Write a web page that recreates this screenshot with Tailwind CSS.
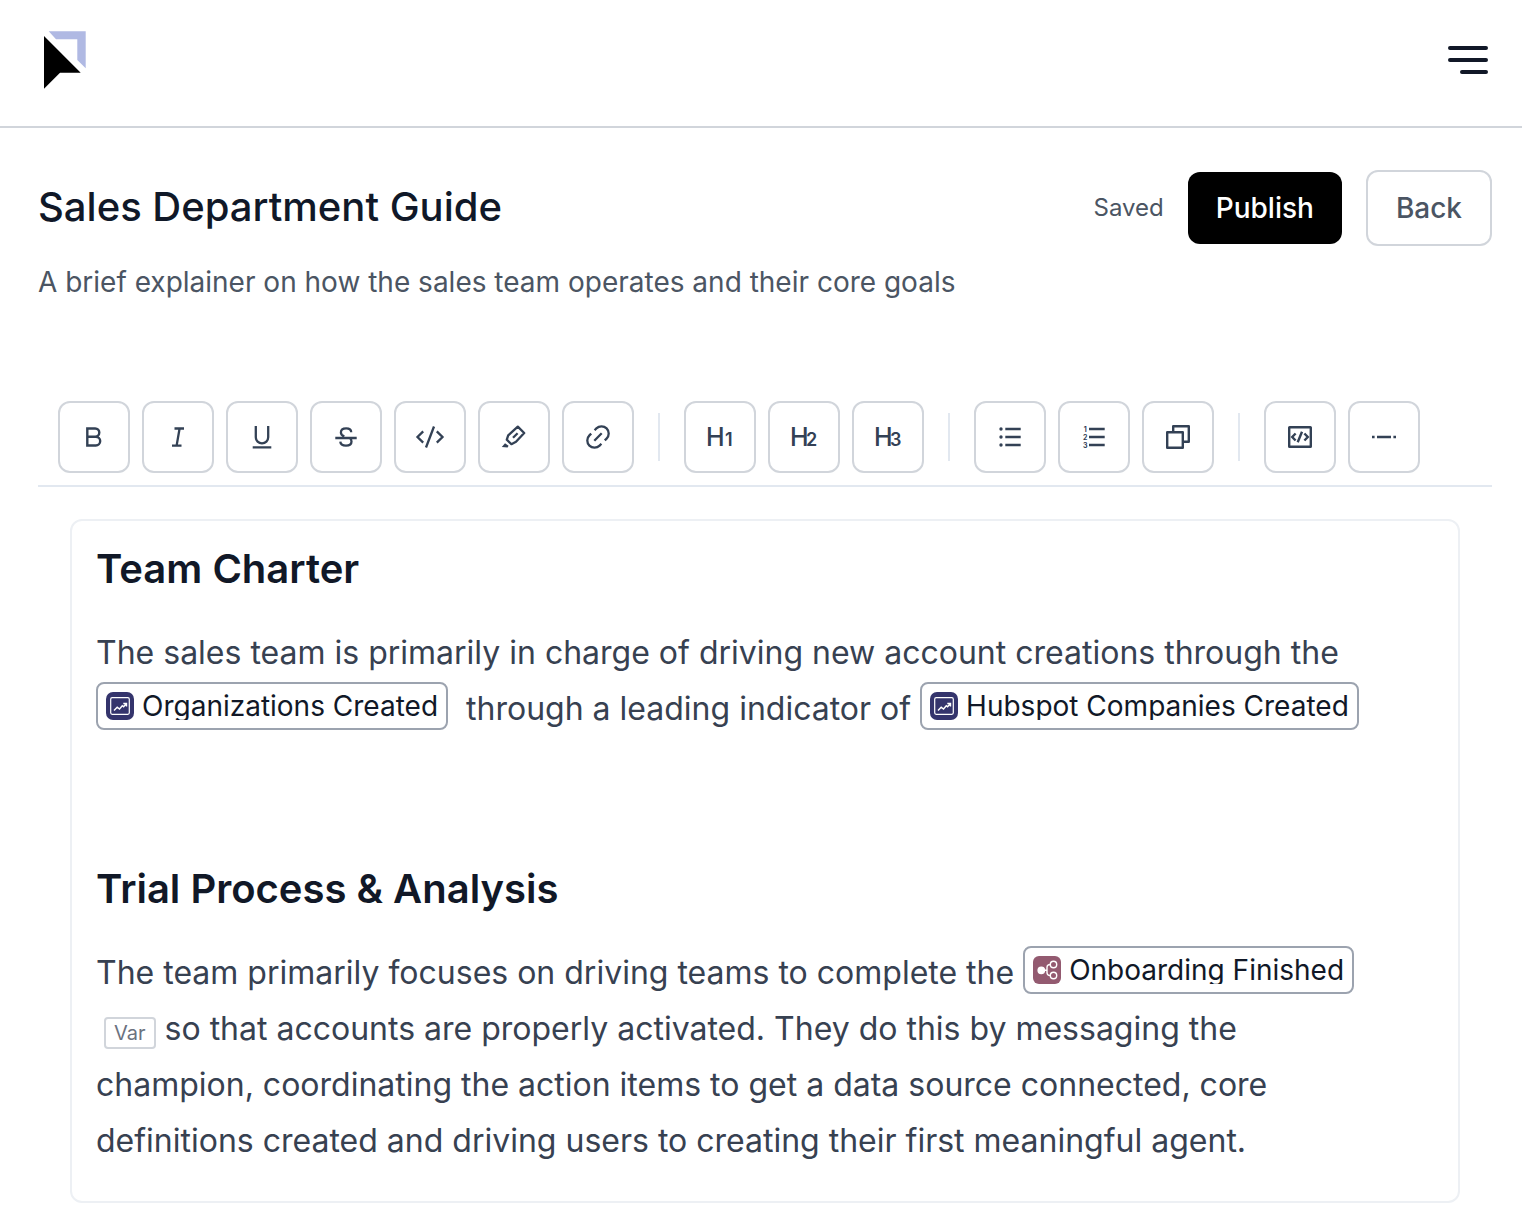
<!DOCTYPE html>
<html lang="en">

<head>
  <meta charset="UTF-8">
  <meta name="viewport" content="width=device-width, initial-scale=1.0">
  <title>Sales Department Guide</title>
  <script src="https://cdn.jsdelivr.net/npm/@tailwindcss/browser@4"></script>
</head>

<body class="bg-white font-['Inter',sans-serif] text-gray-900 [font-optical-sizing:none]">

  <header class="flex items-start justify-between border-b-2 border-[#d1d5db] pt-[30px] pb-9 pl-10 pr-[30px]">
    <a href="#" aria-label="Home">
      <svg class="block h-[60px] w-12" viewBox="0 0 48 60">
        <path fill="#b0b9e3" d="M8.7 1.3H45.7V38.3L37.3 30V9.3H16z" />
        <path fill="#000" d="M4 6L40.7 42.7H20L4 58.7z" />
      </svg>
    </a>
    <button type="button" aria-label="Menu" class="mt-1">
      <svg class="block h-12 w-12" viewBox="0 0 48 48" fill="none" stroke="#111827" stroke-width="4" stroke-linecap="round">
        <path d="M6 14H42M6 26H42M18 38H42" />
      </svg>
    </button>
  </header>

  <main class="pt-[42px] pb-6 pl-[38px] pr-[30px]">

    <!-- Title row -->
    <div class="flex items-center justify-between">
      <h1 class="pb-0.5 text-[40px] leading-[56px] font-medium">Sales Department Guide</h1>
      <div class="flex items-center gap-6">
        <span class="text-2xl text-[#4b5563]">Saved</span>
        <button type="button" class="h-[72px] rounded-xl bg-black px-7 text-[28px] font-medium text-white">Publish</button>
        <button type="button" class="h-[76px] rounded-xl border-2 border-[#d1d5db] px-7 text-[28px] font-medium text-[#4b5563]">Back</button>
      </div>
    </div>
    <p class="mt-4 text-[28px] leading-10 text-[#4b5563]">A brief explainer on how the sales team operates and their core goals</p>

    <!-- Toolbar -->
    <div role="toolbar" aria-label="Formatting" class="mt-[99px] flex flex-wrap items-center gap-3 border-b-2 border-[#e2e8f0] px-5 pb-3 text-[#334155]">
      <button type="button" aria-label="Bold" class="flex size-[72px] items-center justify-center rounded-xl border-2 border-[#d1d5db]">
        <svg class="size-9" viewBox="0 0 36 36" fill="none" stroke="currentColor" stroke-width="2.4"><path d="M11.3 9.5h7.9a4.1 4.1 0 0 1 0 8.2h-7.9zM11.3 17.7h8.5a4.4 4.4 0 0 1 0 8.8h-8.5z" /></svg>
      </button>
      <button type="button" aria-label="Italic" class="flex size-[72px] items-center justify-center rounded-xl border-2 border-[#d1d5db]">
        <svg class="size-9" viewBox="0 0 36 36" fill="none" stroke="currentColor" stroke-width="2.3"><path d="M14.5 9.5H24M12 26.6h9.5M19.6 9.5L16.6 26.6" /></svg>
      </button>
      <button type="button" aria-label="Underline" class="flex size-[72px] items-center justify-center rounded-xl border-2 border-[#d1d5db]">
        <svg class="size-9" viewBox="0 0 36 36" fill="none" stroke="currentColor" stroke-width="2.3"><path d="M11.8 7v11.2a6.2 6.2 0 0 0 12.4 0V7M8.7 28.3h18.6" /></svg>
      </button>
      <button type="button" aria-label="Strikethrough" class="flex size-[72px] items-center justify-center rounded-xl border-2 border-[#d1d5db]">
        <svg class="size-9" viewBox="0 0 36 36" fill="none" stroke="currentColor" stroke-width="2.3"><path d="M7.3 19h21.4M23.2 13.3c0-2.4-2-3.9-5-3.9-3.2 0-5.3 1.5-5.3 4 0 2 1.2 3.1 3.4 4M12.3 22.6c.2 2.6 2.3 4 5.7 4 3.4 0 5.5-1.5 5.5-4.2 0-1.5-.6-2.5-1.8-3.3" /></svg>
      </button>
      <button type="button" aria-label="Inline code" class="flex size-[72px] items-center justify-center rounded-xl border-2 border-[#d1d5db]">
        <svg class="size-9" viewBox="0 0 36 36" fill="none" stroke="currentColor" stroke-width="2.3"><path d="M11.2 12.4L5.5 18l5.7 5.6M24.8 12.4L30.5 18l-5.7 5.6M22 7.5L14 28.5" /></svg>
      </button>
      <button type="button" aria-label="Highlight" class="flex size-[72px] items-center justify-center rounded-xl border-2 border-[#d1d5db]">
        <svg class="size-9" viewBox="0 0 36 36" fill="none" stroke="currentColor" stroke-width="2.3" stroke-linejoin="round"><path d="M21.8 7.6L28.2 14 20 22.8l-4.6 2.4-4.6-4.6 1.4-4.2zM21.6 14.2L17 18.8" /><path fill="currentColor" stroke="none" d="M5.8 28L9 24.2l3.6 2.6-1 1.8z" /></svg>
      </button>
      <button type="button" aria-label="Link" class="flex size-[72px] items-center justify-center rounded-xl border-2 border-[#d1d5db]">
        <svg class="size-9" viewBox="0 0 36 36" fill="none" stroke="currentColor" stroke-width="2.3"><path d="M14.6 11.2l1.8-1.8a7.2 7.2 0 0 1 10.2 10.2L24.8 21.4M11.2 14.6L9.4 16.4A7.2 7.2 0 0 0 19.6 26.6L21.4 24.8M21.7 14.3L14.3 21.7" /></svg>
      </button>

      <div class="mx-3 h-12 w-0.5 bg-[#e2e8f0]"></div>

      <button type="button" aria-label="Heading 1" class="flex size-[72px] items-center justify-center rounded-xl border-2 border-[#d1d5db]">
        <svg class="size-9" viewBox="0 0 36 36" fill="currentColor"><text x="4" y="27" font-size="25" font-weight="500">H</text><text x="23" y="27" font-size="18" font-weight="600">1</text></svg>
      </button>
      <button type="button" aria-label="Heading 2" class="flex size-[72px] items-center justify-center rounded-xl border-2 border-[#d1d5db]">
        <svg class="size-9" viewBox="0 0 36 36" fill="currentColor"><text x="4" y="27" font-size="25" font-weight="500">H</text><text x="20" y="27" font-size="18" font-weight="600">2</text></svg>
      </button>
      <button type="button" aria-label="Heading 3" class="flex size-[72px] items-center justify-center rounded-xl border-2 border-[#d1d5db]">
        <svg class="size-9" viewBox="0 0 36 36" fill="currentColor"><text x="4" y="27" font-size="25" font-weight="500">H</text><text x="20" y="27" font-size="18" font-weight="600">3</text></svg>
      </button>

      <div class="mx-3 h-12 w-0.5 bg-[#e2e8f0]"></div>

      <button type="button" aria-label="Bullet list" class="flex size-[72px] items-center justify-center rounded-xl border-2 border-[#d1d5db]">
        <svg class="size-9" viewBox="0 0 36 36" fill="currentColor"><circle cx="9" cy="10" r="1.7" /><circle cx="9" cy="18" r="1.7" /><circle cx="9" cy="26" r="1.7" /><path stroke="currentColor" stroke-width="2.3" d="M13.3 10h15.4M13.3 18h15.4M13.3 26h15.4" /></svg>
      </button>
      <button type="button" aria-label="Numbered list" class="flex size-[72px] items-center justify-center rounded-xl border-2 border-[#d1d5db]">
        <svg class="size-9" viewBox="0 0 36 36" fill="currentColor"><g font-size="7" font-weight="700" text-anchor="middle"><text x="9.3" y="12.5">1</text><text x="9.3" y="20.5">2</text><text x="9.3" y="28.5">3</text></g><path stroke="currentColor" stroke-width="2.3" d="M13 10h15.7M13 18h15.7M13 26h15.7" /></svg>
      </button>
      <button type="button" aria-label="Duplicate" class="flex size-[72px] items-center justify-center rounded-xl border-2 border-[#d1d5db]">
        <svg class="size-9" viewBox="0 0 36 36" fill="none" stroke="currentColor" stroke-width="2.4" stroke-linejoin="round"><path d="M7.2 13.2h15.6v15.6H7.2zM13.2 13.2V7.2h15.6v15.6H22.8" /></svg>
      </button>

      <div class="mx-3 h-12 w-0.5 bg-[#e2e8f0]"></div>

      <button type="button" aria-label="Code block" class="flex size-[72px] items-center justify-center rounded-xl border-2 border-[#d1d5db]">
        <svg class="size-9" viewBox="0 0 36 36" fill="none" stroke="currentColor" stroke-width="2.4"><rect x="7.2" y="8.2" width="21.6" height="19.6" rx=".4" /><path d="M13.6 14.5L10.2 18l3.4 3.5M22.4 14.5l3.4 3.5-3.4 3.5M20 12.7l-4.3 10.6" /></svg>
      </button>
      <button type="button" aria-label="Divider" class="flex size-[72px] items-center justify-center rounded-xl border-2 border-[#d1d5db]">
        <svg class="size-9" viewBox="0 0 36 36" fill="none" stroke="currentColor" stroke-width="2.4"><path d="M6 18h2.6M11 18h14M27.4 18H30" /></svg>
      </button>
    </div>

    <!-- Document -->
    <article class="mx-8 mt-8 rounded-xl border-2 border-[#edf0f4] pt-5 pr-16 pb-8 pl-6 text-[32px] leading-[56px] text-[#374151]">
      <h2 class="text-[40px] font-semibold text-[#111827]">Team Charter</h2>
      <p class="mt-7">
        The sales team is primarily in charge of driving new account creations through the
        <span class="inline-flex h-12 items-center gap-2 rounded-lg border-2 border-[#9ca3af] px-2 align-baseline text-[28px] leading-7 text-[#111827]">
          <svg class="size-7" viewBox="0 0 28 28" fill="none" stroke="#fff"><rect width="28" height="28" rx="7" fill="#34346c" stroke="none" /><rect x="4.7" y="5.7" width="18.6" height="16.6" rx="1.5" stroke-width="1.2" /><path stroke-width="1.4" d="M8 18.5l3.2-3.3 2.3 1.8 2.8-3.2 1.3 1 2.6-3M17.3 11.5h3.2v3" /></svg>
          <span class="overflow-hidden">Organizations Created</span>
        </span>&nbsp; through a leading indicator of
        <span class="inline-flex h-12 items-center gap-2 rounded-lg border-2 border-[#9ca3af] px-2 align-baseline text-[28px] leading-7 text-[#111827]">
          <svg class="size-7" viewBox="0 0 28 28" fill="none" stroke="#fff"><rect width="28" height="28" rx="7" fill="#34346c" stroke="none" /><rect x="4.7" y="5.7" width="18.6" height="16.6" rx="1.5" stroke-width="1.2" /><path stroke-width="1.4" d="M8 18.5l3.2-3.3 2.3 1.8 2.8-3.2 1.3 1 2.6-3M17.3 11.5h3.2v3" /></svg>
          <span class="overflow-hidden">Hubspot Companies Created</span>
        </span>
      </p>

      <h2 class="mt-[124px] text-[40px] font-semibold text-[#111827]">Trial Process &amp; Analysis</h2>
      <p class="mt-7">
        The team primarily focuses on driving teams to complete the
        <span class="inline-flex h-12 items-center gap-2 rounded-lg border-2 border-[#9ca3af] px-2 align-baseline text-[28px] leading-7 text-[#111827]">
          <svg class="size-7" viewBox="0 0 28 28" fill="none" stroke="#fff" stroke-width="1.4"><rect width="28" height="28" rx="6" fill="#935a70" stroke="none" /><circle cx="8.3" cy="14.3" r="3.2" fill="#fff" /><circle cx="20.5" cy="8.5" r="3.2" /><circle cx="20.5" cy="19.5" r="3.2" /><path d="M11.5 14.3H14M17.3 8.5c-2.4 0-3.3 1-3.3 3v5c0 2 .9 3 3.3 3" /></svg>
          <span class="overflow-hidden">Onboarding Finished</span>
        </span>
        <span class="ml-2 inline-flex h-8 items-center rounded border-2 border-[#d1d5db] px-2 align-baseline text-xl text-[#6b7280]">Var</span>
        so that accounts are properly activated. They do this by messaging the champion, coordinating the action items to get a data source connected, core definitions created and driving users to creating their first meaningful agent.
      </p>
    </article>
  </main>
</body>

</html>
